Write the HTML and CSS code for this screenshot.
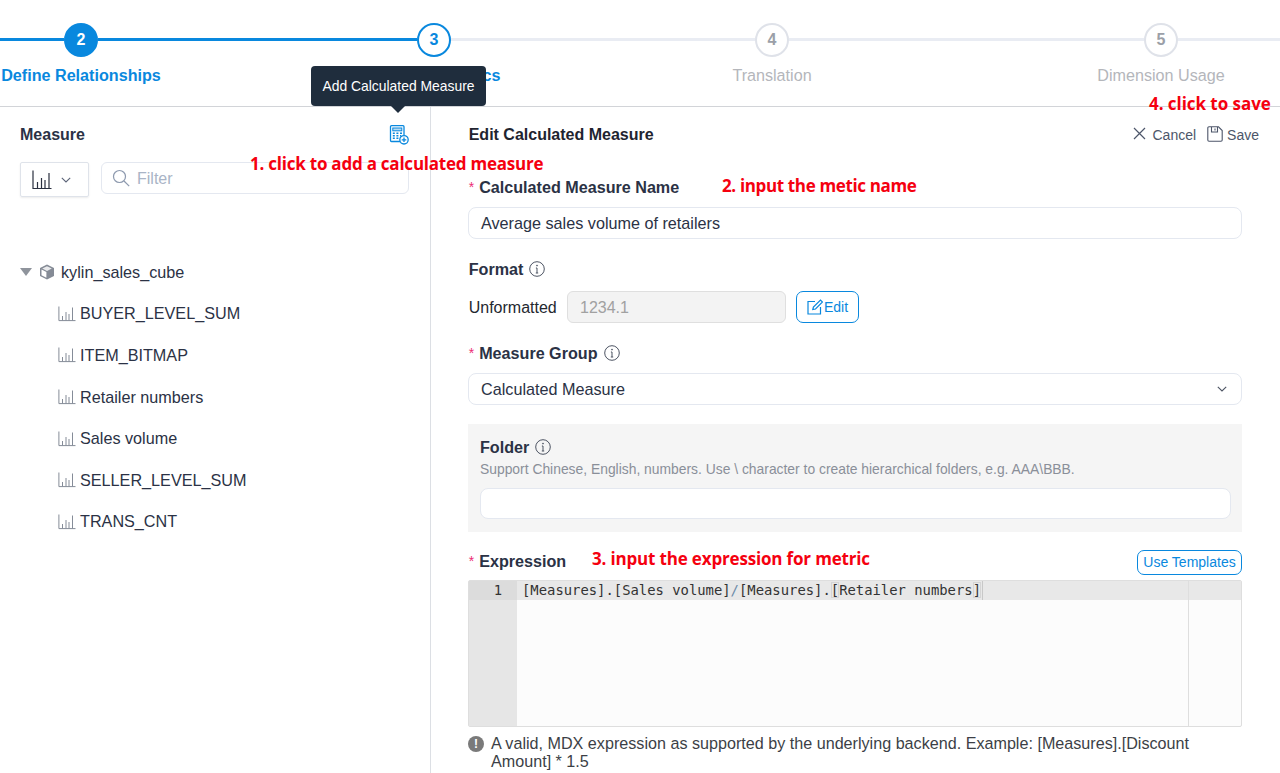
FILE: index.html
```html
<!DOCTYPE html>
<html lang="en">
<head>
<meta charset="utf-8">
<title>Edit Calculated Measure</title>
<link rel="stylesheet" href="styles.css">
</head>
<body>
<div class="page">
  <header class="stepper">
    <span class="line line-a done"></span>
    <div class="step active"><span class="dot filled">2</span><span class="step-label">Define Relationships</span></div>
    <span class="line line-b done"></span>
    <div class="step active"><span class="dot current">3</span><span class="step-label">Calculate Metrics</span></div>
    <span class="line line-c"></span>
    <div class="step"><span class="dot">4</span><span class="step-label">Translation</span></div>
    <span class="line line-d"></span>
    <div class="step"><span class="dot">5</span><span class="step-label">Dimension Usage</span></div>
    <span class="line line-e"></span>
  </header>

  <div class="tooltip">Add Calculated Measure</div>
  <div class="note note-1">1. click to add a calculated measure</div>
  <div class="note note-2">2. input the metic name</div>
  <div class="note note-3">3. input the expression for metric</div>
  <div class="note note-4">4. click to save</div>

  <main class="body">
    <aside class="left">
      <div class="left-head">
        <h2 class="title">Measure</h2>
        <svg class="calc-icon" width="20" height="20" viewBox="0 0 20 20" fill="none" stroke="#0988de" stroke-width="1.300">
          <path d="M11 16.500H2.500a1 1 0 0 1-1-1V1.700a1 1 0 0 1 1-1h11.500a1 1 0 0 1 1 1v8.300"/>
          <rect x="3.800" y="3" width="9" height="2.800" fill="#0988de" fill-opacity=".3" stroke-width="1"/>
          <path d="M3.800 8.300h2M7.400 8.300h2M11 8.300h2M3.800 10.800h2M7.400 10.800h2M11 10.800h1.200M3.800 13.300h2M7.400 13.300h2" stroke-width="1.500"/>
          <circle cx="15" cy="14.800" r="4.200" fill="#fff"/>
          <path d="M15 12.500v4.600M12.700 14.800h4.600"/>
        </svg>
      </div>
      <div class="filters">
        <button class="type-btn">
          <svg width="20" height="20" viewBox="0 0 20 20" fill="none" stroke="#2a3040" stroke-width="1.200"><path d="M1 .5v18h18.500M5.500 12v6M9.500 8v10M13 10v8M17 3v15"/></svg>
          <svg width="10" height="6" viewBox="0 0 10 6" fill="none" stroke="#5c6478" stroke-width="1.100"><path d="M.8.800 5 5l4.200-4.200"/></svg>
        </button>
        <div class="filter-input">
          <svg width="18" height="18" viewBox="0 0 18 18" fill="none" stroke="#8d99ae" stroke-width="1.200"><circle cx="7.500" cy="7.500" r="6"/><path d="m12 12 5.200 5.200"/></svg>
          <span>Filter</span>
        </div>
      </div>
      <div class="tree">
        <div class="tree-root">
          <span class="caret"></span>
          <svg width="16" height="16" viewBox="0 0 16 16"><path d="M8 .5 15 4v8l-7 3.500L1 12V4z" fill="#858b96"/><path d="M8 2.200 12.800 4.500 8 6.900 3.200 4.500z" fill="#e9eaec"/><path d="M2.500 5.500 7.400 8v5.800L2.500 11.300z" fill="#fff"/></svg>
          <span>kylin_sales_cube</span>
        </div>
        <div class="tree-item"><svg class="bars" viewBox="0 0 18 16" fill="none" stroke="#858c98" stroke-width="1"><path d="M.9.500v14.100h16.600M4.500 10v4.500M8 6v8.500M11 8v6.500M14.500 1.500v13"/></svg>BUYER_LEVEL_SUM</div>
        <div class="tree-item"><svg class="bars" viewBox="0 0 18 16" fill="none" stroke="#858c98" stroke-width="1"><path d="M.9.500v14.100h16.600M4.500 10v4.500M8 6v8.500M11 8v6.500M14.500 1.500v13"/></svg>ITEM_BITMAP</div>
        <div class="tree-item"><svg class="bars" viewBox="0 0 18 16" fill="none" stroke="#858c98" stroke-width="1"><path d="M.9.500v14.100h16.600M4.500 10v4.500M8 6v8.500M11 8v6.500M14.500 1.500v13"/></svg>Retailer numbers</div>
        <div class="tree-item"><svg class="bars" viewBox="0 0 18 16" fill="none" stroke="#858c98" stroke-width="1"><path d="M.9.500v14.100h16.600M4.500 10v4.500M8 6v8.500M11 8v6.500M14.500 1.500v13"/></svg>Sales volume</div>
        <div class="tree-item"><svg class="bars" viewBox="0 0 18 16" fill="none" stroke="#858c98" stroke-width="1"><path d="M.9.500v14.100h16.600M4.500 10v4.500M8 6v8.500M11 8v6.500M14.500 1.500v13"/></svg>SELLER_LEVEL_SUM</div>
        <div class="tree-item"><svg class="bars" viewBox="0 0 18 16" fill="none" stroke="#858c98" stroke-width="1"><path d="M.9.500v14.100h16.600M4.500 10v4.500M8 6v8.500M11 8v6.500M14.500 1.500v13"/></svg>TRANS_CNT</div>
      </div>
    </aside>

    <section class="right">
      <div class="right-head">
        <h2 class="title title-dark">Edit Calculated Measure</h2>
        <div class="actions">
          <span class="action"><svg width="13" height="13" viewBox="0 0 13 13" fill="none" stroke="#4d566a" stroke-width="1.200"><path d="m1 1 11 11M12 1 1 12"/></svg>Cancel</span>
          <span class="action"><svg width="16" height="16" viewBox="0 0 16 16" fill="none" stroke="#4d566a" stroke-width="1.100"><path d="M2 .8h9.500l3.700 3.700V14a1.200 1.200 0 0 1-1.200 1.200H2A1.200 1.200 0 0 1 .8 14V2A1.200 1.200 0 0 1 2 .8z"/><path d="M4.500 1v5h6V1M8 2.500v2"/></svg>Save</span>
        </div>
      </div>

      <label class="field-label req label-name">Calculated Measure Name</label>
      <div class="input input-name">Average sales volume of retailers</div>

      <div class="field-label label-format">Format <svg class="info" width="16" height="16" viewBox="0 0 16 16" fill="none" stroke="#4d5463" stroke-width="1"><circle cx="8" cy="8" r="7.300"/><path d="M8 7v5M6.800 12h2.400M6.900 7H8"/><circle cx="8" cy="4.600" r=".5"/></svg></div>
      <div class="format-row">
        <span class="format-text">Unformatted</span>
        <div class="format-value">1234.1</div>
        <button class="edit-btn"><svg width="16" height="16" viewBox="0 0 16 16" fill="none" stroke="#0988de" stroke-width="1.200"><path d="M8 2.500H1v12.500h12.500V8"/><path d="M5.800 10.500 6.400 8 13.500 1l2 2-7 7z"/></svg>Edit</button>
      </div>

      <div class="field-label req label-group">Measure Group <svg class="info" width="16" height="16" viewBox="0 0 16 16" fill="none" stroke="#4d5463" stroke-width="1"><circle cx="8" cy="8" r="7.300"/><path d="M8 7v5M6.800 12h2.400M6.900 7H8"/><circle cx="8" cy="4.600" r=".5"/></svg></div>
      <div class="input select">Calculated Measure
        <svg width="10" height="6" viewBox="0 0 10 6" fill="none" stroke="#4d5463" stroke-width="1.100"><path d="M.8.800 5 5l4.200-4.200"/></svg>
      </div>

      <div class="folder">
        <div class="field-label label-folder">Folder <svg class="info" width="16" height="16" viewBox="0 0 16 16" fill="none" stroke="#4d5463" stroke-width="1"><circle cx="8" cy="8" r="7.300"/><path d="M8 7v5M6.800 12h2.400M6.900 7H8"/><circle cx="8" cy="4.600" r=".5"/></svg></div>
        <p class="folder-hint">Support Chinese, English, numbers. Use \ character to create hierarchical folders, e.g. AAA\BBB.</p>
        <div class="input input-empty"></div>
      </div>

      <div class="expr-head">
        <span class="field-label req label-expr">Expression</span>
        <button class="tpl-btn">Use Templates</button>
      </div>
      <div class="editor">
        <div class="gutter"><div class="gutter-active">1</div></div>
        <div class="code">
          <div class="code-line"><span>[Measures].[Sales volume]<span class="op">/</span>[Measures].<span class="bracket">[</span>Retailer numbers<span class="bracket">]</span></span><span class="cursor"></span></div>
          <span class="margin-line"></span>
        </div>
      </div>
      <div class="hint">
        <span class="hint-icon">!</span>
        <p>A valid, MDX expression as supported by the underlying backend. Example: [Measures].[Discount Amount] * 1.5</p>
      </div>
    </section>
  </main>
</div>
</body>
</html>
```
FILE: styles.css
```css
* { box-sizing: border-box; }
html, body { margin: 0; padding: 0; }
body { font-family: "Liberation Sans", Arial, sans-serif; color: #2b3245; background: #fff; overflow: hidden; }
.page { position: relative; width: 1280px; height: 773px; overflow: hidden; }
button { font-family: inherit; background: none; cursor: pointer; }
h2, p { margin: 0; }

.stepper { height: 107px; border-bottom: 1px solid #d2d4d8; display: flex; align-items: flex-start; padding-top: 23px; }
.line { height: 3px; margin-top: 15px; background: #e9ecf3; }
.line.done { background: #0988de; }
.line-a { flex: 0 0 64px; }
.line-b { flex: 0 0 319px; }
.line-c { flex: 0 0 304px; }
.line-d { flex: 0 0 355px; }
.line-e { flex: 0 0 102px; }
.step { flex: 0 0 34px; width: 34px; display: flex; flex-direction: column; align-items: center; }
.dot { width: 34px; height: 34px; border-radius: 50%; border: 2px solid #dfe2e9; background: #fff; color: #9b9fa8; font-size: 16px; font-weight: 700; display: flex; align-items: center; justify-content: center; }
.dot.filled { background: #0988de; border-color: #0988de; color: #fff; }
.dot.current { border: 2.500px solid #0988de; color: #0988de; }
.step-label { margin-top: 8px; font-size: 16.150px; line-height: 20px; white-space: nowrap; color: #b4b6bb; }
.step.active .step-label { color: #0988de; font-weight: 700; }

.tooltip { position: absolute; left: 311px; top: 66px; width: 175px; height: 40px; background: #1f2d3d; color: #fff; border-radius: 4px; font-size: 13.900px; line-height: 40px; text-align: center; z-index: 3; }
.tooltip::after { content: ""; position: absolute; left: 80px; bottom: -7px; border-left: 7px solid transparent; border-right: 7px solid transparent; border-top: 7px solid #1f2d3d; }

.note { position: absolute; z-index: 4; color: #f5000f; font-family: "Open Sans", sans-serif; font-weight: 700; font-size: 17px; line-height: 24px; white-space: nowrap; letter-spacing: -.2px; }
.note-1 { left: 250px; top: 152px; letter-spacing: -.23px; }
.note-2 { left: 722px; top: 174px; letter-spacing: -.36px; }
.note-3 { left: 592px; top: 547px; letter-spacing: -.17px; }
.note-4 { left: 1149px; top: 92px; letter-spacing: -.05px; }

.body { display: flex; height: 666px; }
.left { flex: 0 0 431px; border-right: 1px solid #dcdfe4; padding: 0 21px 0 20px; }
.right { flex: 1 1 auto; padding: 0 38px 0 37px; }

.left-head { display: flex; justify-content: space-between; align-items: center; height: 54px; padding-top: 1px; }
.title { font-size: 16px; font-weight: 700; line-height: 20px; color: #2b3245; }
.title-dark { color: #1f2430; margin-left: .7px; }
.calc-icon { margin-top: 1px; }

.filters { display: flex; gap: 12px; align-items: flex-start; margin-top: 1px; }
.type-btn { width: 69px; height: 35px; border: 1px solid #dfe3ea; border-radius: 2px; padding: 0 0 0 11px; display: flex; align-items: center; gap: 9px; box-shadow: 0 1px 2px rgba(0,0,0,.08); }
.filter-input { flex: 1; height: 32px; border: 1px solid #e4e8f0; border-radius: 6px; display: flex; align-items: center; gap: 7px; padding-left: 10px; color: #a9b4c6; font-size: 16px; }
.filter-input span { margin-top: 2px; }

.tree { margin-top: 54.500px; font-size: 16.200px; }
.tree-root { display: flex; align-items: center; height: 41.600px; gap: 5px; }
.caret { width: 0; height: 0; border-left: 6.500px solid transparent; border-right: 6.500px solid transparent; border-top: 8px solid #8f949c; margin-right: 2px; }
.tree-item { display: flex; align-items: center; height: 41.600px; padding-left: 38px; gap: 4px; }
.tree-root span:last-child { margin-left: 1px; }
.bars { width: 18px; height: 16px; }

.right-head { display: flex; justify-content: space-between; align-items: center; height: 54px; padding-top: 1px; margin-right: -17px; }
.actions { display: flex; gap: 11px; font-size: 14px; color: #4d566a; }
.action { display: flex; align-items: center; gap: 6px; }
.action + .action { gap: 4px; }
.action svg { margin-top: -2px; }

.field-label { font-size: 16.150px; font-weight: 700; line-height: 20px; color: #2b3245; display: flex; align-items: center; gap: 6px; margin-left: .7px; }
.req::before { content: "*"; color: #ec2b75; font-weight: 400; font-size: 14px; margin-right: -1px; }
.label-name { margin-top: 16px; }
.input { height: 32px; margin-top: 10px; border: 1px solid #e4e8f0; border-radius: 8px; padding: 0 12px; font-size: 16.200px; line-height: 30px; color: #2b3245; background: #fff; }
.label-format { margin-top: 20px; }
.format-row { display: flex; align-items: center; margin-top: 12px; font-size: 16px; }
.format-text { color: #24282f; width: 99px; margin: 1px 0 0 .7px; }
.format-value { width: 219px; height: 32px; margin-left: -.7px; border: 1px solid #dfdfdf; border-radius: 6px; background: #f3f3f3; color: #a1a1a1; padding-left: 12px; line-height: 31px; }
.edit-btn { margin-left: 10px; width: 63px; height: 32px; border: 1px solid #0988de; border-radius: 7px; color: #0988de; font-size: 14px; padding: 0; display: flex; align-items: center; justify-content: center; gap: 1px; }
.label-group { margin-top: 20px; }
.select { display: flex; justify-content: space-between; align-items: center; padding-right: 14px; margin-top: 10px; }
.folder { margin-top: 19px; background: #f5f5f5; height: 108px; padding: 13px 11px 0 12px; }
.label-folder { margin-left: 0; }
.folder-hint { font-size: 13.860px; line-height: 18px; color: #8a8f99; margin-top: 3px; white-space: nowrap; }
.input-empty { margin-top: 10px; height: 31px; }

.expr-head { display: flex; justify-content: space-between; align-items: center; margin-top: 17px; height: 26px; }
.label-expr { margin-top: -3px; }
.tpl-btn { height: 25px; width: 105px; padding: 0; border: 1px solid #0988de; border-radius: 7px; color: #0988de; font-size: 14px; }
.editor { display: flex; margin-top: 5px; height: 147px; border: 1px solid #dedede; border-radius: 2px; background: #fcfcfc; }
.gutter { flex: 0 0 48px; background: #e6e6e6; }
.gutter-active { height: 19px; background: #dcdcdc; font-family: "DejaVu Sans Mono", monospace; font-size: 13.870px; line-height: 18px; text-align: right; padding-right: 15px; color: #333; }
.code { position: relative; flex: 1; }
.code-line { height: 19px; background: #e8e8e8; font-family: "DejaVu Sans Mono", monospace; font-size: 13.870px; line-height: 18px; padding-left: 5px; color: #333; white-space: pre; display: flex; }
.op { color: #6d8ba8; }
.bracket { box-shadow: inset 0 0 0 1px #d5d5d5; }
.cursor { width: 1px; height: 19px; margin-left: 1px; background: #c8c8c8; }
.margin-line { position: absolute; right: 52px; top: 0; bottom: 0; width: 1px; background: #dedede; }
.hint { display: flex; gap: 7px; margin-top: 7px; font-size: 16.150px; line-height: 18px; color: #3c3f46; }
.hint-icon { flex: 0 0 16px; width: 16px; height: 16px; margin-top: 2px; border-radius: 50%; background: #7a7a7a; color: #fff; font-size: 12px; font-weight: 700; line-height: 16px; text-align: center; }
.hint p { width: 750px; }
```
